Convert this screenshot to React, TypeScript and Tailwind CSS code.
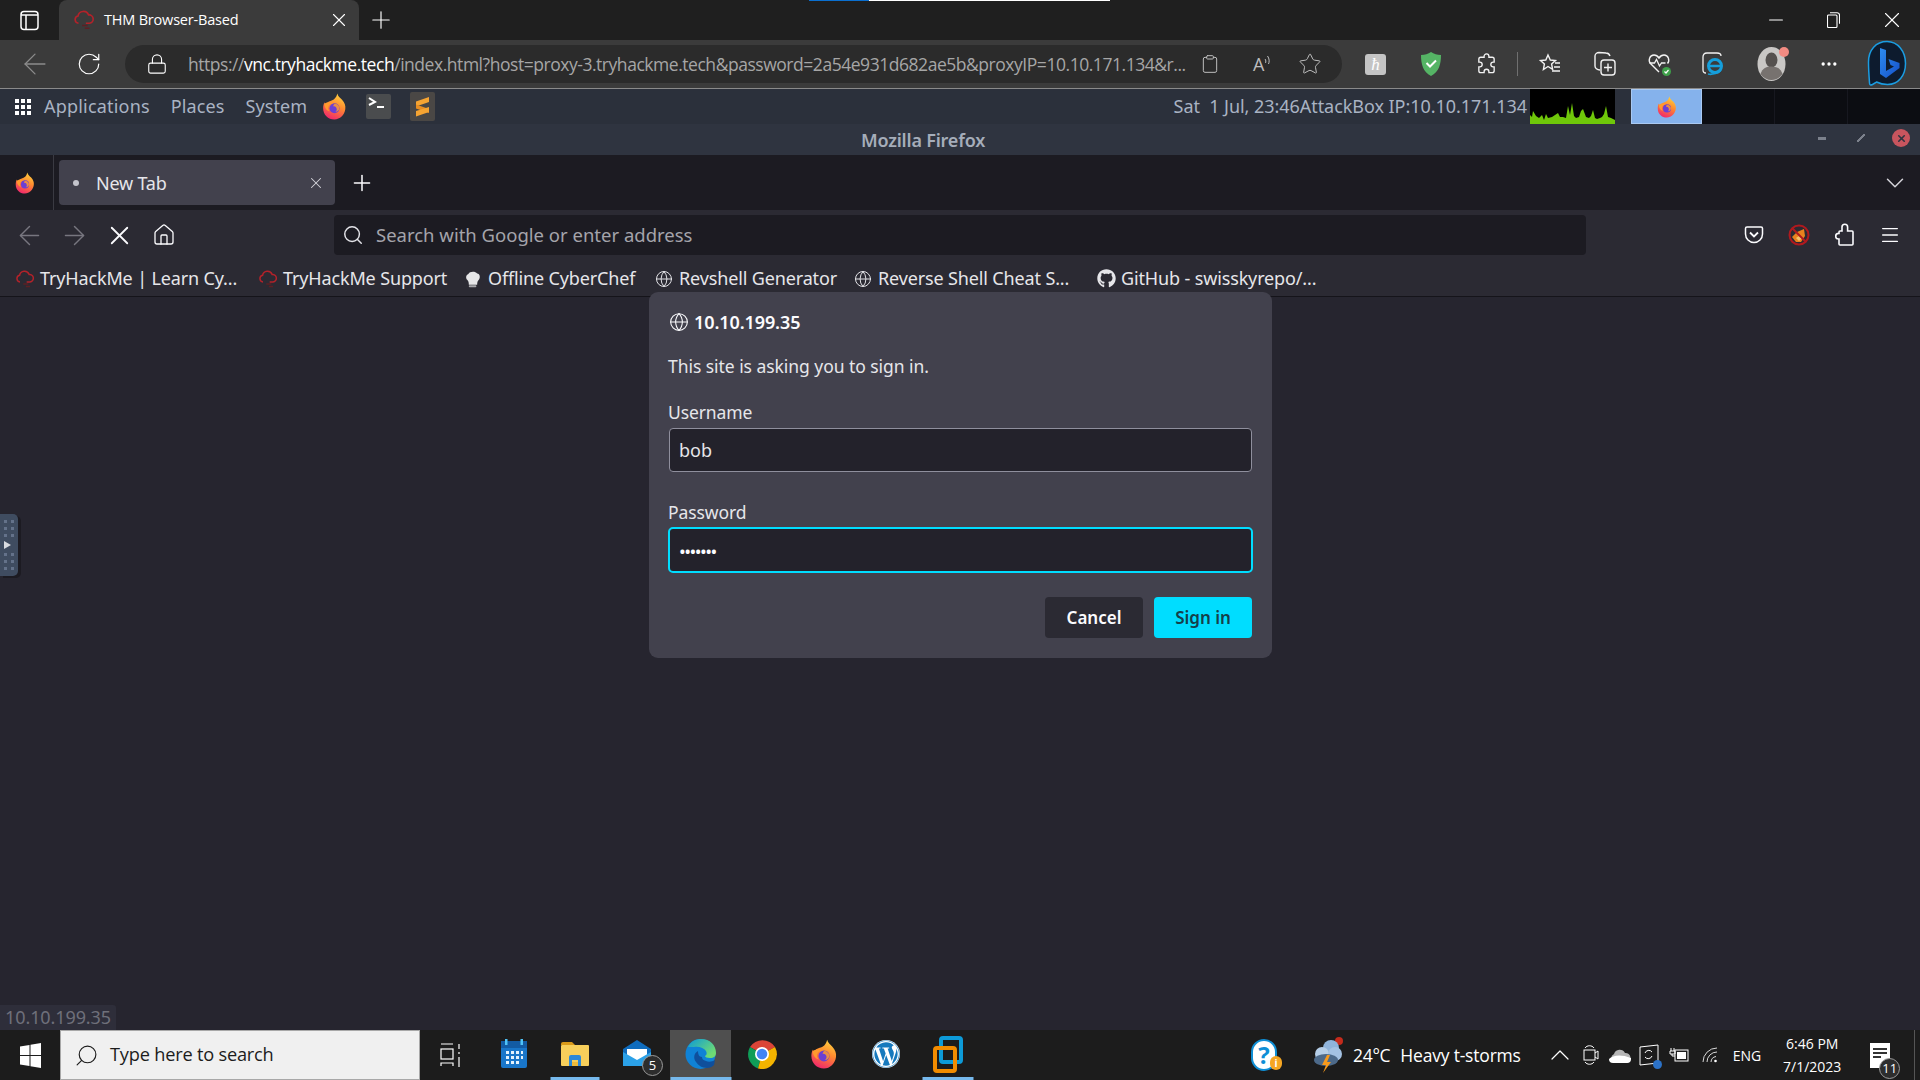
import React, { useId } from "react";
import {
  ArrowLeft,
  ArrowRight,
  ChevronDown,
  ChevronUp,
  Home,
  Lock,
  Menu,
  Minus,
  MoreHorizontal,
  Plus,
  RotateCw,
  Search,
  Star,
  X,
  Globe,
  Clipboard,
} from "lucide-react";
import { FaGithub, FaWordpress } from "react-icons/fa";

const uiFont = "font-['Noto_Sans',sans-serif]";
const winFont = "font-['Open_Sans',sans-serif]";

const FirefoxLogo = ({ size = 24 }: { size?: number }) => {
  const id = useId();
  return (
    <svg width={size} height={size} viewBox="0 0 24 24">
      <defs>
        <linearGradient id={id} x1="0.7" y1="0" x2="0.3" y2="1">
          <stop offset="0" stopColor="#ffd23f" />
          <stop offset="0.45" stopColor="#ff8a2f" />
          <stop offset="1" stopColor="#f0246e" />
        </linearGradient>
      </defs>
      <path
        d="M14.5 .5c.6 2.600 2.400 3.600 4.200 5.600 2.400 2.700 3.300 5.300 2.900 8.200-.7 5.300-4.700 9.200-9.700 9.200-5.600 0-10-4.300-10-10 0-2 .4-3.700 1.300-5.200.1 1.200.5 1.900 1.100 2.400.6-2 2.100-3.200 4.200-3.700 2.700-.6 5.200-2.500 6-6.500z"
        fill={`url(#${id})`}
      />
      <circle cx="12" cy="13.500" r="4.400" fill="#6b3fd4" />
      <path d="M3 9.500c2.500-1.500 5.800-1.700 8-.5-2.200.3-3.700 1.300-4.300 2.900-.6 1.700 0 3.300 1.200 4.400-3-.6-4.900-3.500-4.900-6.800z" fill="#ff9a2e" />
      <path d="M12 9.500c2.400 0 4.300 1.700 4.300 3.800 0 1.800-1.500 3.300-3.500 3.500 1.300-1 1.600-2.500.8-3.800-.6-1-1.600-1.300-2.800-1.300.2-.9.700-1.700 1.200-2.200z" fill="#ff9a2e" opacity="0.85" />
    </svg>
  );
};

const ThmCloud = ({ size = 18 }: { size?: number }) => (
  <svg width={size} height={size} viewBox="0 0 24 24" fill="none" stroke="#b3222a" strokeWidth="1.800">
    <path d="M6 15.500a4 4 0 0 1-.5-7.900 6 6 0 0 1 11.500-1.100 4.500 4.500 0 0 1 1 9h-4" />
    <path d="M10 18h6M13 21h5" stroke="#5c2024" />
  </svg>
);

const ChefHat = () => (
  <svg width="20" height="20" viewBox="0 0 24 24" fill="#e6e6e8">
    <path d="M7 19c0-3-.5-4.500-2-6-2-2-1.500-6 1.500-7 1-3 8-4 10.500-.5 3.500.5 4 5 2 7.500-1.500 1.500-2 3-2 6z" />
    <rect x="7" y="19.500" width="9" height="2.500" rx="1" fill="#a9a9ad" />
  </svg>
);

const TerminalTile = () => (
  <svg width="25" height="25" viewBox="0 0 25 25">
    <rect width="25" height="25" rx="2" fill="#4a4c4e" />
    <path d="M3 4l6 4-6 3" stroke="#fff" strokeWidth="2" fill="none" />
    <path d="M11 13h7" stroke="#fff" strokeWidth="2" />
  </svg>
);

const SublimeTile = () => (
  <svg width="25" height="29" viewBox="0 0 25 29">
    <rect width="25" height="29" rx="2" fill="#4a4745" />
    <path d="M6 9.500L19 5v5L6 14.500z" fill="#f6a432" />
    <path d="M6 12.500l13 4.500v-1 5L6 16.500z" fill="#e98e22" />
    <path d="M6 19L19 15v5L6 24.500z" fill="#f6a432" />
  </svg>
);

const Sparkline = () => (
  <svg className="h-[35px] w-[85px]" viewBox="0 0 85 35" preserveAspectRatio="none">
    <rect width="85" height="35" fill="#000" />
    <polygon
      fill="#6fc70a"
      points="0,35 0,26 2,28 3,22 6,27 9,29 12,26 14,31 16,25 18,29 22,28 25,26 28,24 30,28 33,28 36,29 38,17 40,26 42,14 44,27 46,29 49,28 51,22 53,20 56,28 59,29 61,27 63,21 65,29 67,30 70,29 72,28 74,25 76,17 78,28 81,29 85,31 85,35"
    />
  </svg>
);

const ShieldIcon = () => (
  <svg width="22" height="26" viewBox="0 0 22 26">
    <path d="M11 1c3 2 6 3 10 3 0 9-2 17-10 21C3 21 1 13 1 4c4 0 7-1 10-3z" fill="#55b465" />
    <path d="M6.500 12l3.500 3.500 6-6" stroke="#fff" strokeWidth="2" fill="none" />
  </svg>
);

const EdgePuzzle = () => (
  <svg width="23" height="24" viewBox="0 0 24 24" fill="none" stroke="#f2f2f2" strokeWidth="1.400">
    <path d="M9.500 4a2.500 2.500 0 0 1 5 0v1H18a2 2 0 0 1 2 2v3h-1a2.500 2.500 0 0 0 0 5h1v4a2 2 0 0 1-2 2h-3.500v-1a2.500 2.500 0 0 0-5 0v1H6a2 2 0 0 1-2-2v-4h1a2.500 2.500 0 0 0 0-5H4V7a2 2 0 0 1 2-2h3.500z" />
  </svg>
);

const FirefoxPuzzle = () => (
  <svg width="20" height="24" viewBox="0 0 20 24" fill="none" stroke="#fbfbfe" strokeWidth="1.600">
    <path d="M7 4a2.800 2.800 0 0 1 5.600 0v4h4.400a1 1 0 0 1 1 1v12a1 1 0 0 1-1 1H5a1 1 0 0 1-1-1v-5H3.500a2.800 2.800 0 0 1 0-5.600H4V9a1 1 0 0 1 1-1h2z" />
  </svg>
);

const FavoritesIcon = () => (
  <svg width="24" height="24" viewBox="0 0 24 24" fill="none" stroke="#f2f2f2" strokeWidth="1.400">
    <path d="M10 3l2.300 5 5.200.5-3.900 3.500 1 5.300L10 14.500l-4.600 3 1-5.500L2.500 8.500 7.800 8z" />
    <path d="M17 11h5M16 15h6M14 19h8" />
  </svg>
);

const CollectionsIcon = () => (
  <svg width="24" height="26" viewBox="0 0 24 26" fill="none" stroke="#f2f2f2" strokeWidth="1.400">
    <path d="M7 19c-3 0-5-2-5-4V5c0-2 2-3.500 4-3.500l7 .5c2 0 3.500 1.500 4 3" />
    <rect x="8" y="9" width="14" height="15" rx="3" />
    <path d="M15 12.500v8M11 16.500h8" />
  </svg>
);

const HealthIcon = () => (
  <svg width="26" height="26" viewBox="0 0 26 26" fill="none">
    <path d="M12 21L3.500 12.500C1 9.500 2.500 4 7 4c2.500 0 4 1.500 5 3 1-1.500 2.500-3 5-3 4.500 0 6 5.500 3.500 8.500" stroke="#f2f2f2" strokeWidth="1.400" />
    <path d="M2.500 12h5l2-3.500 3 6.500 2-3h4" stroke="#f2f2f2" strokeWidth="1.300" />
    <circle cx="19.500" cy="20.500" r="4.500" fill="#3fa14a" />
    <path d="M17.500 20.500l1.500 1.500 2.500-3" stroke="#fff" strokeWidth="1.200" />
  </svg>
);

const IEIcon = () => (
  <svg width="26" height="26" viewBox="0 0 26 26" fill="none">
    <path d="M5 22c-2 0-3-1-3-3V6c0-2 1-4 4-4h10c2 0 4 1 4 3" stroke="#f2f2f2" strokeWidth="1.300" />
    <circle cx="14" cy="15" r="6.500" stroke="#159fdc" strokeWidth="3" />
    <path d="M8 15h12" stroke="#159fdc" strokeWidth="2.500" />
    <path d="M20 19c-2 3-9 5-13 4" stroke="#159fdc" strokeWidth="1.800" />
  </svg>
);

const ProfileIcon = () => (
  <div className="relative h-[34px] w-[30px]">
    <svg width="30" height="34" viewBox="0 0 30 34">
      <ellipse cx="14.500" cy="17" rx="14" ry="17" fill="#c9c7c5" />
      <ellipse cx="14.500" cy="13" rx="6" ry="7.500" fill="#55514f" />
      <path d="M3.500 27c2-6 6-7.500 11-7.500s9 1.500 11 7.500c-3 4-7 6-11 6s-8-2-11-6z" fill="#77726f" />
    </svg>
    <span className="absolute right-[-2px] top-0 h-[10px] w-[10px] rounded-full bg-[#f28b82]" />
  </div>
);

const BingIcon = () => {
  const id = useId();
  return (
    <svg width="40" height="48" viewBox="0 0 40 48">
      <defs>
        <linearGradient id={id} x1="0" y1="0" x2="1" y2="1">
          <stop offset="0" stopColor="#2d8cf0" />
          <stop offset="1" stopColor="#1550c8" />
        </linearGradient>
      </defs>
      <path
        d="M20 1.500C9 1.500 1.500 10 1.500 22c0 7 .5 14 1 21 0 2 1 2.500 3 1.500l4-2.500c3 1.500 7 2.500 11 2.500 11 0 18-9 18-21S31 1.500 20 1.500z"
        fill="#0d1b2e"
        stroke="#1b9de2"
        strokeWidth="1.500"
      />
      <path d="M13 8l6 2v21l8-4.500-3.500-1.500-2-6 11 4v5L19 38l-6-4z" fill={`url(#${id})`} />
    </svg>
  );
};

const FoxBlocked = () => (
  <svg width="22" height="22" viewBox="0 0 22 22">
    <circle cx="11" cy="11" r="9.500" fill="#2b2a33" stroke="#b0191e" strokeWidth="2" />
    <path d="M4 13l5-5 7-3 1 7-4 6-5 0z" fill="#e8821e" />
    <path d="M8 14l3-2 3 2-3 3z" fill="#f5c46c" />
    <path d="M4 4l14 14" stroke="#b0191e" strokeWidth="2" />
  </svg>
);

const PocketIcon = () => (
  <svg width="20" height="20" viewBox="0 0 20 20" fill="none" stroke="#fbfbfe" strokeWidth="1.500">
    <path d="M3 2h14a1.500 1.500 0 0 1 1.500 1.500V9a8.500 8.500 0 0 1-17 0V3.500A1.500 1.500 0 0 1 3 2z" />
    <path d="M6 7.500l4 4 4-4" strokeWidth="1.800" />
  </svg>
);

const WindowsLogo = () => (
  <svg width="21" height="25" viewBox="0 0 21 25" fill="#fff">
    <path d="M0 3.500l9.500-1.500v10H0zM10.500 1.800L21 0v12H10.500zM0 13h9.500v10L0 21.500zM10.500 13H21v12l-10.500-1.800z" />
  </svg>
);

const TaskViewIcon = () => (
  <svg width="21" height="24" viewBox="0 0 21 24" fill="none" stroke="#fff" strokeWidth="1.200">
    <path d="M1 1h12M1 23v-3h12v3" />
    <rect x="1" y="6" width="12" height="10" />
    <path d="M19 1v5M19 9v2M19 14v10" />
  </svg>
);

const CalendarIcon = () => (
  <svg width="26" height="30" viewBox="0 0 26 30">
    <rect y="2" width="26" height="27" rx="2" fill="#1976c9" />
    <rect y="2" width="26" height="7" fill="#135ba3" />
    <rect x="4" y="0" width="2.500" height="6" fill="#4fc3f7" />
    <rect x="19.500" y="0" width="2.500" height="6" fill="#4fc3f7" />
    <path
      d="M5 12h3v3H5zM10 12h3v3h-3zM15 12h3v3h-3zM20 12h2v3h-2zM5 17h3v3H5zM10 17h3v3h-3zM15 17h3v3h-3zM20 17h2v3h-2zM5 22h3v3H5zM10 22h3v3h-3zM15 22h3v3h-3z"
      fill="#e3f2fd"
    />
  </svg>
);

const FolderIcon = () => (
  <svg width="28" height="24" viewBox="0 0 28 24">
    <path d="M0 2a2 2 0 0 1 2-2h9l3 3H0z" fill="#d99a1a" />
    <rect y="3" width="28" height="21" rx="1" fill="#f7cf5b" />
    <path d="M8 15a2 2 0 0 1 2-2h8a2 2 0 0 1 2 2v9h-3v-6h-6v6H8z" fill="#2b88d8" />
    <rect x="11" y="20" width="6" height="4" fill="#f0bb39" />
  </svg>
);

const MailIcon = () => (
  <div className="relative h-[30px] w-[34px]">
    <svg width="28" height="28" viewBox="0 0 28 28">
      <path d="M14 1l14 9v17H0V10z" fill="#0f6cbd" />
      <path d="M4 10h20v9L14 23 4 19z" fill="#fff" />
      <path d="M0 13l14 8 14-8v14H0z" fill="#2ba1e8" />
    </svg>
    <span className="absolute bottom-[-7px] right-[-6px] flex h-[21px] w-[21px] items-center justify-center rounded-full border border-[#9a9a9a] bg-[#2d2d2d] text-[13px] leading-none text-white">
      5
    </span>
  </div>
);

const EdgeLogo = () => {
  const id = useId();
  return (
    <svg width="31" height="30" viewBox="0 0 31 30">
      <defs>
        <linearGradient id={id} x1="0.2" y1="0" x2="1" y2="0.6">
          <stop offset="0" stopColor="#1aa3c9" />
          <stop offset="1" stopColor="#6fdc74" />
        </linearGradient>
      </defs>
      <circle cx="15.500" cy="15" r="15" fill="#0f82d6" />
      <path d="M3 8C6 2 11 0 16 0c9 0 15 6 15 14 0 3-2 5-6 5-3 0-5-1-5-2 2-1 2-3 1-5-2-3-7-5-12-4-3 0-5 0-6 0z" fill={`url(#${id})`} />
      <path d="M13 12c-4 2-5 7-2 11 2 3 6 6 11 6 3 0 5-1 7-3l1-5c-3 2-7 2-9 1-3-1-4-2-4-4-3 0-4-3-4-6z" fill="#0f4f9c" />
    </svg>
  );
};

const ChromeLogo = () => (
  <svg width="30" height="30" viewBox="0 0 30 30">
    <path d="M15 15L3 8A15 15 0 0 1 28 8z" fill="#db4437" />
    <path d="M15 15L3 8A15 15 0 0 0 11 29.500z" fill="#0f9d58" />
    <path d="M15 15L28 8A15 15 0 0 1 11 29.500z" fill="#f4b400" />
    <circle cx="15" cy="15" r="7" fill="#fff" />
    <circle cx="15" cy="15" r="5.300" fill="#4285f4" />
  </svg>
);

const VmwareIcon = () => (
  <svg width="30" height="37" viewBox="0 0 30 37" fill="none">
    <rect x="8" y="2" width="20" height="24" rx="2" stroke="#0d9bd8" strokeWidth="4" />
    <rect x="2" y="12" width="20" height="23" rx="2" stroke="#f28c00" strokeWidth="4" />
  </svg>
);

const HelpIcon = () => (
  <div className="relative h-[32px] w-[28px]">
    <div className="flex h-[32px] w-[26px] items-center justify-center rounded-full border-2 border-[#0f8fd6] bg-white text-[24px] font-bold leading-none text-[#0f8fd6]">
      ?
    </div>
    <span className="absolute bottom-[1px] right-[-3px] flex h-[14px] w-[12px] items-center justify-center rounded-full bg-[#f5a623] text-[10px] font-bold leading-none text-white">
      i
    </span>
  </div>
);

const WeatherIcon = () => (
  <svg width="32" height="36" viewBox="0 0 32 36">
    <circle cx="26" cy="4" r="4" fill="#c42b1c" />
    <circle cx="18" cy="11" r="8" fill="#8fb4dc" />
    <circle cx="9" cy="17" r="7" fill="#b5cee8" />
    <circle cx="22" cy="17" r="7" fill="#a4c2e3" />
    <ellipse cx="13" cy="23" rx="12" ry="6" fill="#4d6a8a" />
    <path d="M14 18l-5 10h4l-3 8 8-11h-4l3-7z" fill="#f79a1c" />
  </svg>
);

const TrayMeet = () => (
  <svg width="16" height="22" viewBox="0 0 16 22" fill="none" stroke="#fff" strokeWidth="1">
    <path d="M2 4c2-3 7-3 9 0M2 18c2 3 7 3 9 0" />
    <rect x="1" y="6" width="11" height="10" />
    <path d="M12 9l3-2v8l-3-2" />
  </svg>
);

const TrayCloud = () => (
  <svg width="22" height="15" viewBox="0 0 22 15">
    <path d="M5 15a5 5 0 0 1 0-9 6 6 0 0 1 11-1 5 5 0 0 1 1 10z" fill="#b5b5b5" />
    <path d="M0 11c4-4 12-5 22-1v1a4 4 0 0 1-4 4H4a4 4 0 0 1-4-4z" fill="#fff" />
  </svg>
);

const TraySync = () => (
  <div className="relative h-[22px] w-[20px]">
    <svg width="20" height="22" viewBox="0 0 20 22" fill="none" stroke="#fff" strokeWidth="1">
      <path d="M1 3l18-2v18l-18 2z" />
      <path d="M6 9a4 4 0 0 1 7-1M13 12a4 4 0 0 1-7 1" />
    </svg>
    <span className="absolute bottom-[-3px] right-[-3px] h-[9px] w-[9px] rounded-full bg-[#2c72c7]" />
  </div>
);

const TrayBattery = () => (
  <svg width="20" height="14" viewBox="0 0 20 14" fill="none" stroke="#fff" strokeWidth="1">
    <path d="M2 0v3M5 0v3M1 3h5v3H1z" />
    <path d="M3 6v2h3" />
    <rect x="6" y="2" width="13" height="11" />
    <rect x="8" y="4" width="9" height="7" fill="#fff" stroke="none" />
  </svg>
);

const TrayWifi = () => (
  <svg width="16" height="16" viewBox="0 0 16 16" fill="none" stroke="#d8d8d8" strokeWidth="1">
    <path d="M1 15A14 14 0 0 1 15 1M5 15A10 10 0 0 1 15 5M9 15a6 6 0 0 1 5-5.500" />
    <circle cx="13.500" cy="14" r="1.300" fill="#fff" stroke="none" />
  </svg>
);

// edge browser chrome
const EdgeTabStrip = () => (
  <div className="flex h-[40px] shrink-0 items-center bg-[#1f1f1f]">
    <div className="flex w-[59px] justify-center">
      <svg width="19" height="21" viewBox="0 0 19 21" fill="none" stroke="#fff" strokeWidth="1.500">
        <rect x="1" y="1.500" width="17" height="18" rx="3" />
        <path d="M1 5h17M6 5v14" />
      </svg>
    </div>
    <div className="flex h-full w-[300px] items-center rounded-t-[8px] bg-[#3b3b3b] pl-[14px] pr-[9px]">
      <ThmCloud size={22} />
      <span className={`ml-[9px] flex-1 text-[14.500px] tracking-[-0.2px] text-white ${winFont}`}>THM Browser-Based</span>
      <X size={22} color="#fff" strokeWidth={1.200} />
    </div>
    <div className="ml-[7px] flex w-[30px] justify-center">
      <Plus size={28} color="#fff" strokeWidth={1} />
    </div>
    <div className="flex-1" />
    <div className="flex w-[152px] items-center justify-between pr-[15px]">
      <Minus size={22} color="#fff" strokeWidth={1.100} className="ml-[-3px]" />
      <svg width="13" height="16" viewBox="0 0 13 16" fill="none" stroke="#fff" strokeWidth="1.100" className="ml-[1px]">
        <rect x="0.500" y="3" width="9.500" height="12.500" rx="1" />
        <path d="M3 .7h7a2.500 2.500 0 0 1 2.500 2.500v8.500" />
      </svg>
      <X size={26} color="#fff" strokeWidth={1} />
    </div>
  </div>
);

const EdgeToolbar = () => (
  <div className="flex h-[49px] shrink-0 items-center border-b border-[#8a8a8a] bg-[#3b3b3b]">
    <div className="flex w-[125px] items-center pl-[18px]">
      <ArrowLeft size={34} color="#8c8c8c" strokeWidth={0.900} />
      <RotateCw size={26} color="#fff" strokeWidth={1.100} className="ml-[24px]" />
    </div>
    <div className="flex h-[38px] w-[1217px] items-center rounded-full bg-[#2b2b2b] pl-[21px] pr-[19px]">
      <Lock size={22} color="#fff" strokeWidth={1.200} />
      <span className={`ml-[20px] w-[998px] whitespace-nowrap text-[17.500px] tracking-[-0.46px] text-[#a6a6a6] ${winFont}`}>
        https://<span className="text-white">vnc.tryhackme.tech</span>
        /index.html?host=proxy-3.tryhackme.tech&amp;password=2a54e931d682ae5b&amp;proxyIP=10.10.171.134&amp;r...
      </span>
      <Clipboard size={20} color="#bdbdbd" strokeWidth={1.200} className="ml-[14px]" />
      <span className={`ml-[33px] text-[18px] leading-none text-[#bdbdbd] ${winFont}`}>A</span>
      <svg width="7" height="11" viewBox="0 0 7 11" fill="none" stroke="#bdbdbd" className="mb-[7px]">
        <path d="M1 4c1 1 1 3 .5 4M3.500 1c2 2.500 2 6 1 8" />
      </svg>
      <Star size={24} color="#bdbdbd" strokeWidth={1} className="ml-[27px]" />
    </div>
    <div className="ml-[23px] flex h-[21px] w-[21px] items-center justify-center rounded-[3px] bg-[#c4c4c4] font-['Liberation_Serif',serif] text-[17px] italic leading-none text-white">
      ħ
    </div>
    <div className="ml-[34px]">
      <ShieldIcon />
    </div>
    <div className="ml-[33px]">
      <EdgePuzzle />
    </div>
    <div className="ml-[19px] h-[24px] w-px bg-[#707070]" />
    <div className="ml-[20px]">
      <FavoritesIcon />
    </div>
    <div className="ml-[31px]">
      <CollectionsIcon />
    </div>
    <div className="ml-[30px]">
      <HealthIcon />
    </div>
    <div className="ml-[28px]">
      <IEIcon />
    </div>
    <div className="ml-[30px]">
      <ProfileIcon />
    </div>
    <MoreHorizontal size={20} color="#fff" className="ml-[32px]" />
    <div className="ml-[28px]">
      <BingIcon />
    </div>
  </div>
);

// attack box desktop panel
const DesktopPanel = () => (
  <div className={`flex h-[35px] shrink-0 items-center bg-[#2b303b] text-[18px] text-[#a9b3c3] ${uiFont}`}>
    <div className="ml-[15px] grid grid-cols-3 gap-[2px]">
      {Array.from({ length: 9 }).map((_, i) => (
        <span key={i} className="h-[4px] w-[4px] bg-white" />
      ))}
    </div>
    <span className="ml-[13px] tracking-[0.2px]">Applications</span>
    <span className="ml-[21px] tracking-[0.1px]">Places</span>
    <span className="ml-[21px] tracking-[0.1px]">System</span>
    <div className="ml-[14px]">
      <FirefoxLogo size={27} />
    </div>
    <div className="ml-[18px]">
      <TerminalTile />
    </div>
    <div className="ml-[19px]">
      <SublimeTile />
    </div>
    <div className="flex-1" />
    <span className="whitespace-pre tracking-[-0.05px]">Sat  1 Jul, 23:46AttackBox IP:10.10.171.134</span>
    <div className="ml-[3px]">
      <Sparkline />
    </div>
    <div className="ml-[16px] flex h-full w-[71px] items-center justify-center border border-[#a9c9f2] bg-[#85b2ec]">
      <FirefoxLogo size={22} />
    </div>
    <div className="flex h-full w-[218px] bg-[#0c0d12]">
      <div className="w-[73px] border-r border-[#171820]" />
      <div className="w-[73px] border-r border-[#171820]" />
    </div>
  </div>
);

const FirefoxTitle = () => (
  <div className={`relative flex h-[31px] shrink-0 items-center justify-center bg-[#2f3440] pt-[2px] ${uiFont}`}>
    <span className="ml-[-74px] text-[18px] font-semibold tracking-[-0.2px] text-[#a5adba]">Mozilla Firefox</span>
    <div className="absolute right-[10px] top-[5px] flex items-center">
      <span className="h-[3px] w-[8px] bg-[#7c818c]" />
      <span className="ml-[31px] h-[8px] w-[8px] bg-[linear-gradient(135deg,transparent_40%,#7c818c_40%,#7c818c_60%,transparent_60%)]" />
      <span className="ml-[27px] flex h-[18px] w-[18px] items-center justify-center rounded-full bg-[#c8555e]">
        <X size={11} color="#2f3440" strokeWidth={3.500} />
      </span>
    </div>
  </div>
);

const FirefoxTabs = () => (
  <div className={`flex h-[55px] shrink-0 items-center bg-[#1c1b22] ${uiFont}`}>
    <div className="flex h-full w-[54px] items-center justify-center border-r border-[#3a3a42] pr-[4px]">
      <FirefoxLogo size={22} />
    </div>
    <div className="ml-[5px] flex h-[45px] w-[276px] items-center rounded-[4px] bg-[#42414d] pl-[14px] pr-[10px]">
      <span className="h-[6px] w-[6px] rounded-full bg-[#c4c4cc]" />
      <span className="ml-[17px] flex-1 pt-[1px] text-[18px] tracking-[-0.2px] text-[#e6e6ea]">New Tab</span>
      <X size={18} color="#d4d4da" strokeWidth={1.400} />
    </div>
    <div className="ml-[14px]">
      <Plus size={26} color="#fbfbfe" strokeWidth={1.400} />
    </div>
    <div className="flex-1" />
    <ChevronDown size={30} color="#d4d4da" strokeWidth={1.200} className="mr-[10px]" />
  </div>
);

const FirefoxToolbar = () => (
  <div className={`flex h-[45px] shrink-0 items-center bg-[#2b2a33] pt-[5px] ${uiFont}`}>
    <div className="flex w-[334px] items-center pl-[14px]">
      <ArrowLeft size={31} color="#77767f" strokeWidth={1.100} />
      <ArrowRight size={31} color="#77767f" strokeWidth={1.100} className="ml-[14px]" />
      <X size={31} color="#fbfbfe" strokeWidth={1.400} className="ml-[14px]" />
      <Home size={24} color="#fbfbfe" strokeWidth={1.300} className="ml-[17px]" />
    </div>
    <div className="flex h-[40px] w-[1252px] items-center rounded-[4px] bg-[#1c1b22] pl-[8px]">
      <Search size={22} color="#e3e3e8" strokeWidth={1.600} />
      <span className="ml-[12px] text-[18.500px] text-[#a4a4ab]">Search with Google or enter address</span>
    </div>
    <div className="ml-auto mr-[19px] flex items-center">
      <PocketIcon />
      <div className="ml-[24px]">
        <FoxBlocked />
      </div>
      <div className="ml-[25px]">
        <FirefoxPuzzle />
      </div>
      <Menu size={22} color="#fbfbfe" strokeWidth={1.500} className="ml-[24px]" />
    </div>
  </div>
);

const bookmarks = [
  { label: "TryHackMe | Learn Cy...", icon: <ThmCloud size={20} />, left: 15, width: 196 },
  { label: "TryHackMe Support", icon: <ThmCloud size={20} />, left: 22, width: 164 },
  { label: "Offline CyberChef", icon: <ChefHat />, left: 16, width: 150 },
  { label: "Revshell Generator", icon: <Globe size={18} color="#e6e6ea" strokeWidth={1.300} />, left: 16, width: 159 },
  { label: "Reverse Shell Cheat S...", icon: <Globe size={18} color="#e6e6ea" strokeWidth={1.300} />, left: 15, width: 195 },
  { label: "GitHub - swisskyrepo/...", icon: <FaGithub size={19} color="#e6e6ea" />, left: 23, width: 198 },
];

const BookmarksBar = () => (
  <div className={`flex h-[42px] shrink-0 items-center border-b border-[#15141a] bg-[#2b2a33] pt-[6px] ${uiFont}`}>
    {bookmarks.map((b) => (
      <div key={b.label} className="flex items-center" style={{ marginLeft: b.left }}>
        <span className="flex w-[20px] justify-center">{b.icon}</span>
        <span className="ml-[5px] whitespace-nowrap text-[18px] tracking-[-0.14px] text-[#e6e6ea]" style={{ width: b.width }}>
          {b.label}
        </span>
      </div>
    ))}
  </div>
);

const SignInDialog = () => (
  <div className={`absolute left-[649px] top-[-5px] w-[623px] rounded-[9px] bg-[#42414d] px-[20px] pb-[20px] pt-[19px] ${uiFont}`}>
    <div className="flex h-[22px] items-center text-[#fbfbfe]">
      <Globe size={20} strokeWidth={1.300} />
      <span className="ml-[5px] text-[18px] font-semibold tracking-[-0.1px]">10.10.199.35</span>
    </div>
    <p className="ml-[-1px] mt-[22px] text-[17.500px] leading-[22px] tracking-[-0.05px] text-[#e6e6ea]">This site is asking you to sign in.</p>
    <label className="ml-[-1px] mt-[24px] block text-[17.500px] leading-[22px] tracking-[-0.1px] text-[#e6e6ea]">Username</label>
    <input
      readOnly
      value="bob"
      className="mt-[5px] block h-[44px] w-full rounded-[4px] border border-[#8f8f9d] bg-[#23222b] px-[9px] text-[18px] text-[#e6e6ea] outline-none"
    />
    <label className="ml-[-1px] mt-[29px] block text-[17.500px] leading-[22px] tracking-[-0.1px] text-[#e6e6ea]">Password</label>
    <input
      readOnly
      type="password"
      value="1234567"
      className="mx-[-1px] mt-[4px] block h-[46px] w-[calc(100%+2px)] rounded-[5px] border-2 border-[#00ddff] bg-[#23222b] px-[9px] pt-[1px] text-[18px] tracking-[-1.5px] text-[#fbfbfe] outline-none"
    />
    <div className="mt-[24px] flex justify-end gap-[11px]">
      <button className="h-[41px] w-[98px] rounded-[4px] bg-[#2b2a33] text-[17px] font-semibold text-[#fbfbfe]">Cancel</button>
      <button className="h-[41px] w-[98px] rounded-[4px] bg-[#00ddff] text-[17px] font-semibold text-[#15404a]">Sign in</button>
    </div>
  </div>
);

const SidebarHandle = () => (
  <div className="absolute left-0 top-[217px] flex h-[62px] w-[18px] flex-col items-center justify-center rounded-r-[5px] bg-[#3f4c60] shadow-[3px_2px_0_#1c1b22]">
    <div className="grid grid-cols-2 gap-x-[4px] gap-y-[4px]">
      {Array.from({ length: 6 }).map((_, i) => (
        <span key={i} className="h-[3px] w-[3px] bg-[#64728a]" />
      ))}
    </div>
    <span className="my-[4px] ml-[-4px] h-0 w-0 border-y-[4px] border-l-[7px] border-y-transparent border-l-[#d8dbe0]" />
    <div className="grid grid-cols-2 gap-x-[4px] gap-y-[4px]">
      {Array.from({ length: 6 }).map((_, i) => (
        <span key={i} className="h-[3px] w-[3px] bg-[#64728a]" />
      ))}
    </div>
  </div>
);

const TaskButton = ({
  children,
  className,
  running,
}: {
  children: React.ReactNode;
  className?: string;
  running?: string;
}) => (
  <div className={`relative flex h-full items-center justify-center pb-[2px] ${className ?? ""}`}>
    {children}
    {running && <span className={`absolute bottom-0 left-1/2 h-[3px] -translate-x-1/2 bg-[#76b9ed] ${running}`} />}
  </div>
);

const Taskbar = () => (
  <div className={`flex h-[50px] shrink-0 items-center bg-[#1c1c1c] text-white ${winFont}`}>
    <div className="flex w-[60px] justify-center">
      <WindowsLogo />
    </div>
    <div className="flex h-full w-[360px] items-center border border-[#a8a8a8] bg-[#f0f0f0] pl-[13px] text-[#1c1c1c]">
      <Search size={25} strokeWidth={1.100} className="scale-x-[-1]" />
      <span className="ml-[11px] text-[18.200px] tracking-[-0.2px]">Type here to search</span>
    </div>
    <div className="flex w-[60px] justify-center">
      <TaskViewIcon />
    </div>
    <TaskButton className="w-[67px]"><CalendarIcon /></TaskButton>
    <TaskButton className="ml-[-3px] w-[62px]" running="w-[49px]"><FolderIcon /></TaskButton>
    <TaskButton className="w-[62px] pl-[6px]"><MailIcon /></TaskButton>
    <TaskButton className="ml-[2px] w-[61px] bg-[#4f4f4f]" running="w-full"><EdgeLogo /></TaskButton>
    <TaskButton className="w-[62px]"><ChromeLogo /></TaskButton>
    <TaskButton className="w-[62px]"><FirefoxLogo size={30} /></TaskButton>
    <TaskButton className="w-[62px]">
      <span className="rounded-full bg-white">
        <FaWordpress size={28} color="#1679bd" />
      </span>
    </TaskButton>
    <TaskButton className="w-[62px]" running="w-[51px]"><VmwareIcon /></TaskButton>
    <div className="ml-[272px]">
      <HelpIcon />
    </div>
    <div className="ml-[34px]">
      <WeatherIcon />
    </div>
    <span className="ml-[8px] text-[17.500px] tracking-[-0.3px]">24°C</span>
    <span className="ml-[10px] text-[17.500px] tracking-[-0.2px]">Heavy t-storms</span>
    <ChevronUp size={32} strokeWidth={0.900} className="ml-[23px]" />
    <div className="ml-[7px]">
      <TrayMeet />
    </div>
    <div className="ml-[10px]">
      <TrayCloud />
    </div>
    <div className="ml-[8px]">
      <TraySync />
    </div>
    <div className="ml-[10px]">
      <TrayBattery />
    </div>
    <div className="ml-[13px]">
      <TrayWifi />
    </div>
    <span className="ml-[15px] text-[14px]">ENG</span>
    <div className="ml-[21px] flex w-[60px] flex-col items-center text-[14px] leading-[23px]">
      <span className="whitespace-nowrap">6:46 PM</span>
      <span className="whitespace-nowrap">7/1/2023</span>
    </div>
    <div className="relative ml-[28px] h-[25px] w-[20px] bg-white pt-[5px]">
      <div className="mx-[3px] h-[2px] bg-[#333]" />
      <div className="mx-[3px] mt-[2px] h-[2px] bg-[#333]" />
      <div className="mx-[3px] mt-[2px] h-[2px] w-[8px] bg-[#333]" />
      <span className="absolute bottom-[-11px] right-[-10px] flex h-[21px] w-[21px] items-center justify-center rounded-full border border-[#9a9a9a] bg-[#2d2d2d] text-[13px] leading-none text-white">
        11
      </span>
    </div>
    <div className="ml-auto mr-[5px] h-full w-px bg-[#555]" />
  </div>
);

const App = () => {
  return (
    <div className="flex h-screen w-screen flex-col overflow-hidden bg-[#26252f]">
      <EdgeTabStrip />
      <div className="absolute left-[809px] top-0 flex h-px">
        <div className="w-[60px] bg-[#0a6fd0]" />
        <div className="w-[241px] bg-white" />
      </div>
      <EdgeToolbar />
      <DesktopPanel />
      <FirefoxTitle />
      <FirefoxTabs />
      <FirefoxToolbar />
      <BookmarksBar />
      <div className="relative flex-1 bg-[#26252f]">
        <SignInDialog />
        <SidebarHandle />
        <div className="absolute bottom-0 left-0 flex h-[25px] w-[116px] items-center justify-center rounded-tr-[3px] bg-[#2e2e3a] font-['Noto_Sans',sans-serif] text-[18px] tracking-[-0.1px] text-[#6f707a]">
          10.10.199.35
        </div>
      </div>
      <Taskbar />
    </div>
  );
};

export default App;
